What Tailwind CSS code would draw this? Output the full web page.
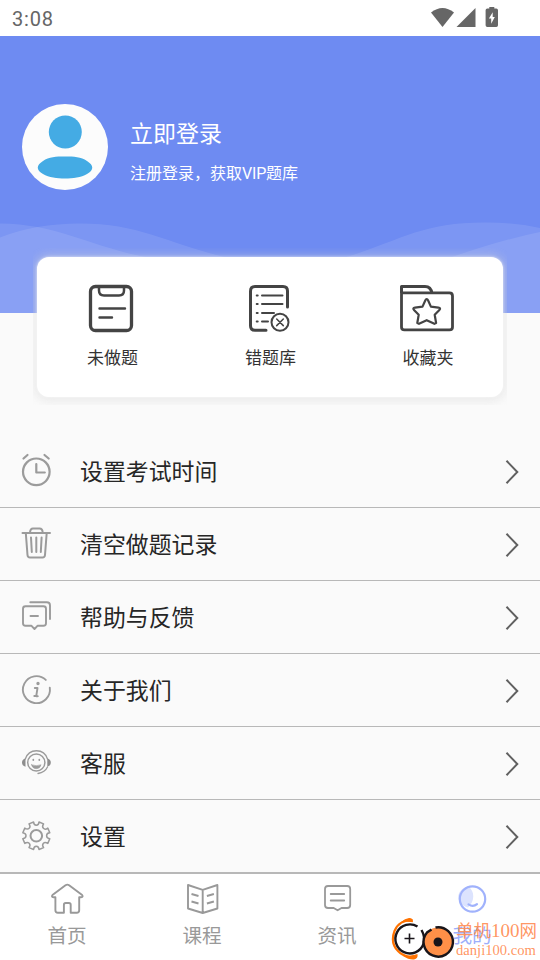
<!DOCTYPE html>
<html lang="zh-CN">
<head>
<meta charset="utf-8">
<title>我的</title>
<script src="https://cdn.jsdelivr.net/npm/@tailwindcss/browser@4"></script>
</head>
<body class="w-[540px] h-[960px] overflow-hidden bg-[#fafafa] font-[Roboto,'Noto_Sans_CJK_SC',sans-serif] text-[#262626]">
<div class="relative flex h-[960px] w-[540px] flex-col">
  <header class="flex h-9 shrink-0 items-center justify-between bg-white pl-3 pr-[42px] text-[#666]">
    <span class="mt-[2px] text-[20px] leading-none font-[450] tracking-[0.8px]">3:08</span>
    <svg class="h-9 w-[68px]" viewBox="430 0 68 36" fill="#666">
      <path d="M431 12.5Q442.500 3.500 454 12.500L442.500 27Z"/>
      <path d="M475.500 8V27H456.500Z"/>
      <path fill-rule="evenodd" d="M489.300 7h5v1.500h2a1.700 1.700 0 0 1 1.700 1.700V25.300a1.700 1.700 0 0 1-1.700 1.700h-9a1.700 1.700 0 0 1-1.700-1.700V10.200a1.700 1.700 0 0 1 1.700-1.700h2zM492.700 12.300l-3.800 6.200h2.300v5.200l3.600-6.800h-2.100z"/>
    </svg>
  </header>

  <section class="relative h-[277px] shrink-0 bg-[#6e8bf2]">
    <svg class="absolute inset-0 h-full w-full" viewBox="0 36 540 277" fill="#fff" fill-opacity=".1">
      <path d="M0 223.500C55 224 85 244 140 256C210 271 290 275 350 256C405 238 425 222 487 222.500Q515 222.500 540 228V313H0Z"/>
      <path d="M0 237.500Q35 223.500 80 223.500C138 223.500 165 242 220 256C290 274 390 276 455 256Q505 239 540 232V313H0Z"/>
    </svg>
    <div class="relative flex items-start pl-[22px] pt-[68px] text-white">
      <svg class="h-[86px] w-[86px]" viewBox="22 104 86 86">
        <circle cx="65" cy="147" r="43" fill="#fcfcfc"/>
        <circle cx="65.300" cy="132" r="16.500" fill="#44abe4"/>
        <path fill="#44abe4" d="M65 156.500c9 0 16 .2 22 4.500 7 4.500 7 9 0 13-6 3.500-14 4.500-22 4.500s-16-1-22-4.500c-7-4-7-8.500 0-13 6-4.300 13-4.500 22-4.500z"/>
      </svg>
      <div class="ml-[22px]">
        <div class="mt-[14px] text-[23px] leading-[34px]">立即登录</div>
        <div class="mt-[10px] text-[16px] leading-6">注册登录，获取<span class="tracking-[-0.2px]">VIP</span>题库</div>
      </div>
    </div>
  </section>

  <section class="relative -mt-[65px] ml-[33px] h-[157px] w-[474px] shrink-0 overflow-hidden pl-[3.500px] pt-[9px]">
    <div class="flex h-[140px] w-[466.500px] rounded-[12px] bg-white pl-[0.5px] shadow-[0_0_3px_rgba(255,255,255,0.7),0_1px_10px_3px_rgba(212,212,212,0.45)] text-[17px] leading-6 text-[#333]">
      <div class="flex w-[151px] flex-col items-center pt-[25px]">
        <svg class="-ml-[3px] h-[52px] w-[52px]" viewBox="85 282 52 52" fill="none" stroke="#444" stroke-linecap="round">
          <rect x="90.500" y="286.500" width="41" height="44" rx="5" stroke-width="3.300"/>
          <path d="M99 287v3.500q0 5 5 5h15q5 0 5-5V287" stroke-width="2.500"/>
          <path d="M99.500 308.500h25.500M99.500 317.500h12.500" stroke-width="2.400"/>
        </svg>
        <span class="mt-[12px]">未做题</span>
      </div>
      <div class="flex w-[165px] flex-col items-center pt-[25px]">
        <svg class="-ml-[2px] h-[52px] w-[52px]" viewBox="244 282 52 52" fill="none" stroke="#444" stroke-linecap="round">
          <path d="M266 330.200h-11q-4.500 0-4.500-4.500v-34.500q0-4.700 4.500-4.700h28q4.500 0 4.500 4.500v16" stroke-width="3"/>
          <path d="M256.700 295.500h1M256.700 304h1M256.700 313h1M256.700 321.500h1M262 295.500h20.500M262 304h20.500M262 313h12M262 321.500h6" stroke-width="2"/>
          <circle cx="280" cy="322.300" r="8.500" stroke-width="2"/>
          <path d="M276.700 319l6.600 6.600m0-6.600l-6.600 6.600" stroke-width="1.500"/>
        </svg>
        <span class="mt-[12px]">错题库</span>
      </div>
      <div class="flex w-[150px] flex-col items-center pt-[25px]">
        <svg class="-ml-[3px] h-[52px] w-[60px]" viewBox="397 282 60 52" fill="none" stroke="#444" stroke-linejoin="round">
          <path d="M401.500 293v-6.500H425q6 0 7 7" stroke-width="3"/>
          <path d="M401.500 292.900h48q3 0 3 3v31q0 3-3 3h-45q-3 0-3-3z" stroke-width="2.800"/>
          <path d="M426.700 299q.8 0 1.200 1l3 6.600 7.500 1c1.800.2 2.200 1.200 1 2.300l-4.700 4.900 1.400 8.200-1.700.8-7.700-3.600-7.700 3.600-1.700-.8 1.400-8.200-4.700-4.900c-1.200-1.100-.8-2.100 1-2.300l7.500-1 3-6.600q.4-1 1.200-1z" stroke-width="2.200"/>
        </svg>
        <span class="mt-[12px]">收藏夹</span>
      </div>
    </div>
  </section>

  <main class="mt-[30px] flex shrink-0 flex-col text-[22.900px]">
    <div class="flex h-[73px] items-center border-b border-[#b8b8b8] pl-5 pr-5">
      <svg class="h-9 w-8" viewBox="20 453 32 36" fill="none" stroke="#9b9b9b" stroke-width="2.200" stroke-linecap="round" stroke-linejoin="round"><circle cx="36.300" cy="471.800" r="13.300"/><path d="M36.300 464v8.500h8.500M23.500 458.500l4-3.500M44.500 455l4.200 3.500"/></svg>
      <span class="ml-7 grow pt-1">设置考试时间</span>
      <svg class="mt-px h-6 w-4" viewBox="0 0 16 24" fill="none" stroke="#606060" stroke-width="2"><path d="M2.500 .8L13.300 12 2.500 23.200"/></svg>
    </div>
    <div class="flex h-[73px] items-center border-b border-[#b8b8b8] pl-5 pr-5">
      <svg class="h-9 w-8" viewBox="20 526 32 36" fill="none" stroke="#9b9b9b" stroke-width="2" stroke-linecap="round" stroke-linejoin="round"><path d="M22.500 533h27.500M30 532.500q.3-4 3-4h6.500q3 0 3.200 4M25.800 533l1.700 22q.2 2.500 2.500 2.500h12.500q2.300 0 2.500-2.500l1.700-22M31 537.500l.8 14.500M36.300 537.500V552M41.600 537.500l-.8 14.500"/></svg>
      <span class="ml-7 grow pt-1">清空做题记录</span>
      <svg class="mt-px h-6 w-4" viewBox="0 0 16 24" fill="none" stroke="#606060" stroke-width="2"><path d="M2.500 .8L13.300 12 2.500 23.200"/></svg>
    </div>
    <div class="flex h-[73px] items-center border-b border-[#b8b8b8] pl-5 pr-5">
      <svg class="h-9 w-8" viewBox="20 599 32 36" fill="none" stroke="#9b9b9b" stroke-width="1.900" stroke-linecap="round" stroke-linejoin="round"><path d="M30.300 602.200h16.500q3.200 0 3.200 3.200V619M25.500 606.300h18q2.500 0 2.500 2.500v14.400q0 2.500-2.500 2.500h-5.800l-3.200 3.300-3.200-3.300h-5.800q-2.500 0-2.500-2.500v-14.400q0-2.500 2.500-2.500zM30.500 616h7.500"/></svg>
      <span class="ml-7 grow pt-1">帮助与反馈</span>
      <svg class="mt-px h-6 w-4" viewBox="0 0 16 24" fill="none" stroke="#606060" stroke-width="2"><path d="M2.500 .8L13.300 12 2.500 23.200"/></svg>
    </div>
    <div class="flex h-[73px] items-center border-b border-[#b8b8b8] pl-5 pr-5">
      <svg class="h-9 w-8" viewBox="20 672 32 36" fill="none" stroke="#9b9b9b" stroke-width="1.900" stroke-linecap="round" stroke-linejoin="round"><path d="M45.800 679.900A13.500 13.500 0 1 0 49.800 687.700"/><circle cx="38" cy="683.500" r="1" fill="#9b9b9b" stroke-width="1.400"/><path d="M34.800 688h2.700l-1.200 7.700q0 1 1.500.5M34.300 696h2.500"/></svg>
      <span class="ml-7 grow pt-1">关于我们</span>
      <svg class="mt-px h-6 w-4" viewBox="0 0 16 24" fill="none" stroke="#606060" stroke-width="2"><path d="M2.500 .8L13.300 12 2.500 23.200"/></svg>
    </div>
    <div class="flex h-[73px] items-center border-b border-[#b8b8b8] pl-5 pr-5">
      <svg class="h-9 w-8" viewBox="20 745 32 36" fill="none" stroke="#9b9b9b" stroke-linecap="round"><circle cx="36.300" cy="762.500" r="8.600" stroke-width="1.500"/><path d="M25.300 759C29 748 44 748 47.500 759M47.500 767q-2.500 5.300-9.500 6.500" stroke-width="1.300"/><path d="M25.500 758.500v8.200q-3.500-.8-3.500-4.100t3.500-4.100zM47.300 758.500v8.200q3.500-.8 3.500-4.100t-3.500-4.100z" fill="#8d8d8d" stroke="none"/><path d="M31.500 764.700q4.800 2 9.600 0-1 4-4.800 4t-4.800-4z" fill="#9b9b9b" stroke-width=".5"/><path d="M33.300 759.700v.3M39.300 759.700v.3" stroke-width="1.800"/></svg>
      <span class="ml-7 grow pt-1">客服</span>
      <svg class="mt-px h-6 w-4" viewBox="0 0 16 24" fill="none" stroke="#606060" stroke-width="2"><path d="M2.500 .8L13.300 12 2.500 23.200"/></svg>
    </div>
    <div class="flex h-[72px] items-center pl-5 pr-5">
      <svg class="h-9 w-8" viewBox="20 817.500 32 36" fill="none" stroke="#9b9b9b" stroke-width="1.500" stroke-linejoin="round"><circle cx="36.300" cy="835.300" r="5.800" stroke-width="2"/><path d="M33.600 821.500q.2 3.200 2.700 3.200t2.700-3.200l4.600 1.900q-1.900 2.600-.2 4.400t4.400-.2l2 4.700q-3.200.3-3.200 3t3.200 2.900l-2 4.700q-2.700-1.900-4.400-.2t.2 4.400l-4.600 1.900q-.2-3.200-2.700-3.200t-2.700 3.200l-4.600-1.900q1.900-2.700.2-4.400t-4.400.2l-2-4.700q3.200-.3 3.200-2.900t-3.200-3l2-4.700q2.700 1.900 4.400.2t-.2-4.400z"/></svg>
      <span class="ml-7 grow pt-1">设置</span>
      <svg class="mt-px h-6 w-4" viewBox="0 0 16 24" fill="none" stroke="#606060" stroke-width="2"><path d="M2.500 .8L13.300 12 2.500 23.200"/></svg>
    </div>
  </main>

  <nav class="grid h-[88px] shrink-0 grid-cols-4 border-t-2 border-[#b8b8b8] bg-white text-[19.600px] leading-7 text-[#999]">
    <div class="-ml-px flex flex-col items-center pt-[7px]">
      <svg class="h-9 w-9" viewBox="49 881 36 36" fill="none" stroke="#999" stroke-width="1.900" stroke-linejoin="round"><path d="M65.500 885.200q1.800-1.200 3.600 0l12.700 9.500q2 2.300-.8 2.600h-1.800v13q0 2.500-2.500 2.500h-6v-8q0-1.800-1.800-1.800h-3.200q-1.800 0-1.800 1.800v8h-6q-2.500 0-2.500-2.500v-13h-1.800q-2.800-.3-.8-2.600z"/></svg>
      <span class="mt-[6px]">首页</span>
    </div>
    <div class="-ml-px flex flex-col items-center pt-[7px]">
      <svg class="h-9 w-9" viewBox="184 881 36 36" fill="none" stroke="#999" stroke-width="1.900" stroke-linejoin="round"><path d="M188 885l14.700 4.800L217.400 885v23.500L202.700 913 188 908.500zM202.700 889.800V913M191.500 894l7 2M191.500 901.500l7 2M213.900 894l-7 2M213.900 901.500l-7 2"/></svg>
      <span class="mt-[6px]">课程</span>
    </div>
    <div class="-ml-px flex flex-col items-center pt-[7px]">
      <svg class="h-9 w-9" viewBox="319 881 36 36" fill="none" stroke="#999" stroke-width="1.800" stroke-linejoin="round" stroke-linecap="round"><path d="M328 886h19.200q3 0 3 3v16q0 3-3 3h-5.700l-3.900 2.300-3.900-2.300H328q-3 0-3-3v-16q0-3 3-3zM330.700 894h13.500M330.700 900.500h13.500"/></svg>
      <span class="mt-[6px]">资讯</span>
    </div>
    <div class="-ml-px flex flex-col items-center pt-[7px] text-[#9daffb]">
      <svg class="h-9 w-9" viewBox="454 881 36 36" fill="none" stroke="#a0b2fc" stroke-width="2.200" stroke-linecap="round"><path d="M468 886.500c7 4 7 15 0 21-13-3-13-18 0-21z" fill="#dce3fe" stroke="none"/><circle cx="472.500" cy="899" r="12.700"/><path d="M468.500 904.300q4.500 3 8.500-.2"/></svg>
      <span class="mt-[6px]">我的</span>
    </div>
  </nav>

  <div class="absolute left-[389px] top-[915px] h-[45px] w-[151px]">
    <svg class="absolute inset-0 h-[45px] w-[66px]" viewBox="389 915 66 45" fill="none">
      <path d="M412.500 920Q399 920 394.500 931Q390 943 398 951Q402 955.500 410 957L417 956" stroke="#ff7200" stroke-width="2.200"/>
      <path d="M401 922q4-3.500 8-4 4-.2 4 4.200-4-1-12-.2zM403 956q9-.2 14.500-2 .8 4.500-3.500 5.500-5 .5-11-3.500z" fill="#ff7200"/>
      <circle cx="410" cy="939" r="14.500" fill="#fff"/>
      <path d="M417.500 926.500A14.500 14.500 0 1 0 423.500 944Q425.500 937 421.500 930" stroke="#19151a" stroke-width="2.400"/>
      <path d="M404.500 938.500h10M409.500 933.500v10" stroke="#19151a" stroke-width="1.600"/>
      <circle cx="438" cy="942" r="14.500" fill="#ff9048"/>
      <path d="M435.500 927.500a14.700 14.700 0 1 1-8.500 5l4.500-3" stroke="#19151a" stroke-width="2.400"/>
      <circle cx="438" cy="942" r="4.500" fill="#19151a"/>
    </svg>
    <div class="absolute left-[67px] top-[5px] whitespace-nowrap font-['Liberation_Serif','Noto_Sans_CJK_SC',serif] text-[#ff8a50]/90">
      <div class="text-[17.500px] leading-[22px]">单机<span class="text-[19px]">100</span>网</div>
      <div class="text-[14.600px] leading-4">danji100.com</div>
    </div>
  </div>
</div>
</body>
</html>
